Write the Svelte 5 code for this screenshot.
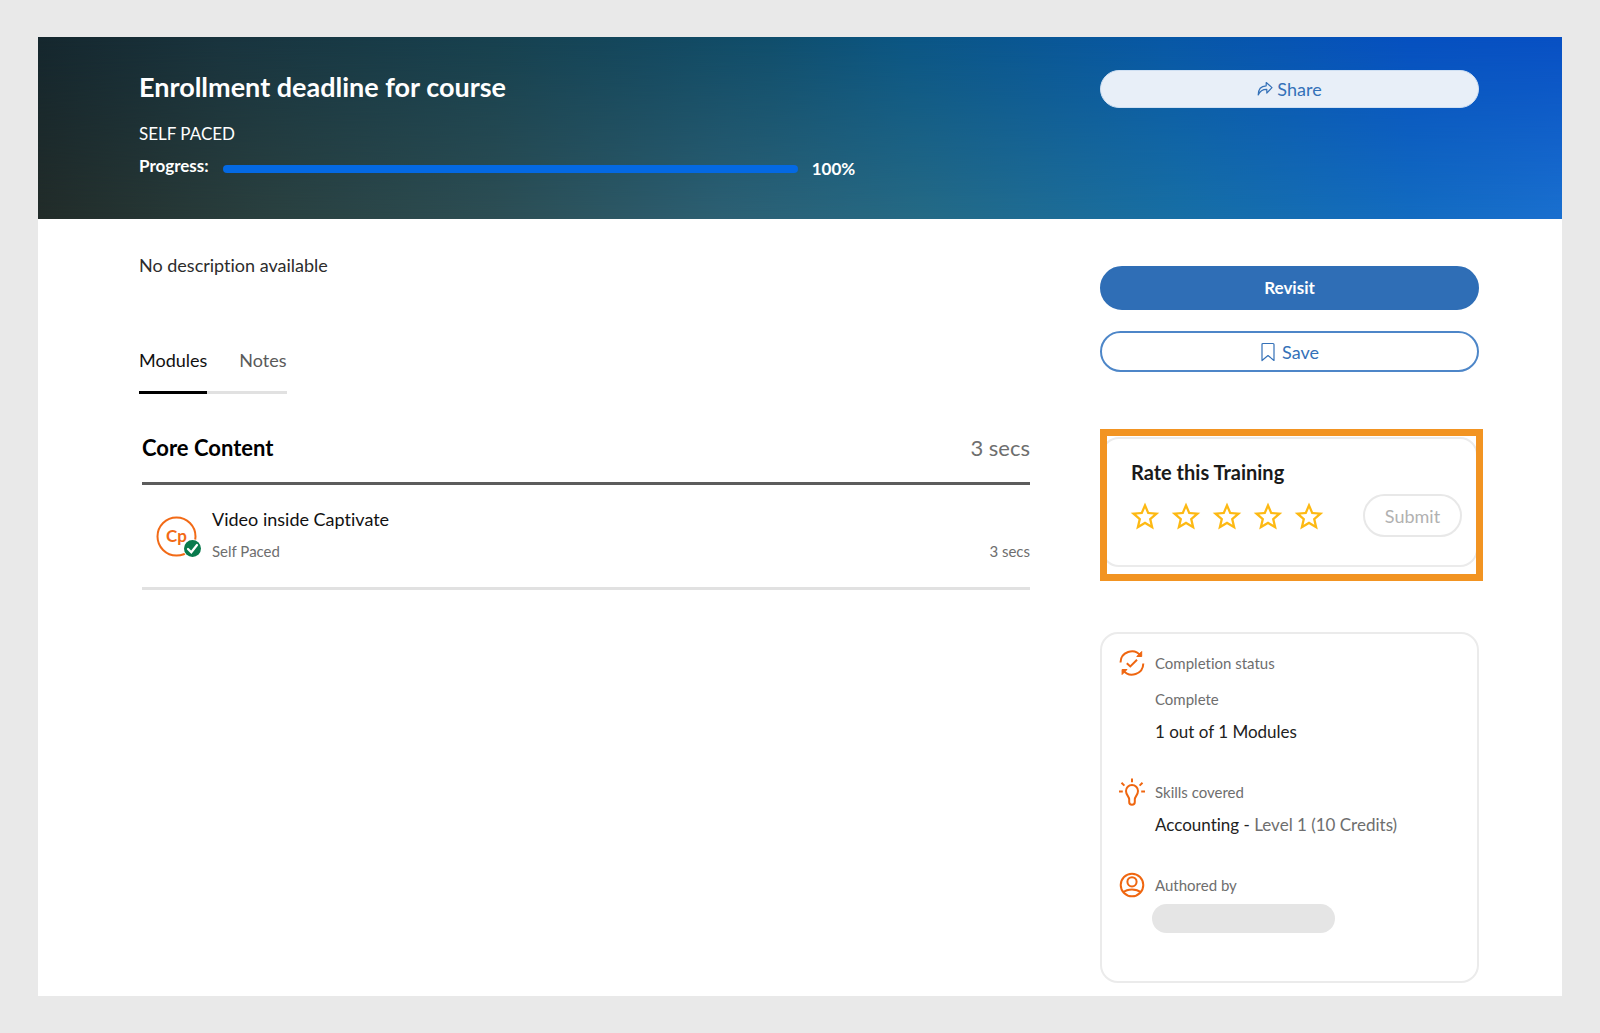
<script>
  let tab = $state('Modules');
  let rating = $state(0);
  const tabs = ['Modules', 'Notes'];
  const stars = [1, 2, 3, 4, 5];
  const progress = 100;
</script>

<div class="page">
  <main class="panel">
    <header class="hero columns">
      <div class="heading">
        <h1>Enrollment deadline for course</h1>
        <p class="format">SELF PACED</p>
        <div class="progress-row">
          <label for="course-progress">Progress:</label>
          <progress id="course-progress" max="100" value={progress}></progress>
          <span class="percent">{progress}%</span>
        </div>
      </div>
      <div class="hero-actions">
        <button class="pill share" type="button">
          <svg width="16" height="16" viewBox="0 0 16 16" aria-hidden="true">
            <path d="M1.2 14C1.2 8.5 4 5 9.2 4.8V1.5L15 6.6L9.8 12V8.4C5.5 8.3 3 10 1.2 14Z" fill="none" stroke="currentColor" stroke-width="1.2" stroke-linejoin="round" />
          </svg>
          Share
        </button>
      </div>
    </header>

    <div class="body columns">
      <div class="content">
        <p class="description">No description available</p>

        <nav class="tabs" aria-label="Course sections">
          {#each tabs as name}
            <button type="button" class:active={tab === name} onclick={() => (tab = name)}>{name}</button>
          {/each}
        </nav>

        <section class="modules">
          <div class="modules-head">
            <h2>Core Content</h2>
            <span>3 secs</span>
          </div>
          <article class="module">
            <svg width="46" height="42" viewBox="0 0 46 42" aria-hidden="true">
              <circle cx="20.500" cy="20.500" r="19" fill="#fff" stroke="#f26a16" stroke-width="2" />
              <text x="20.500" y="26" text-anchor="middle">Cp</text>
              <circle cx="36.500" cy="32.500" r="9.500" fill="#fff" />
              <circle cx="36.500" cy="32.500" r="8.500" fill="#087a4c" />
              <path d="M32 33L35.300 36.300L41 29" fill="none" stroke="#fff" stroke-width="2.200" stroke-linecap="round" />
            </svg>
            <div class="module-text">
              <h3>Video inside Captivate</h3>
              <div class="module-meta"><span>Self Paced</span><span>3 secs</span></div>
            </div>
          </article>
        </section>
      </div>

      <aside>
        <button class="pill revisit" type="button">Revisit</button>
        <button class="pill save" type="button">
          <svg width="16" height="20" viewBox="0 0 16 20" aria-hidden="true">
            <path d="M2 2.500Q2 1.500 3 1.500H13Q14 1.500 14 2.500V18.500L8 13.500L2 18.500Z" fill="none" stroke="currentColor" stroke-width="1.200" stroke-linejoin="round" />
          </svg>
          Save
        </button>

        <div class="highlight">
          <form class="rating" onsubmit={(e) => e.preventDefault()}>
            <h2 id="rate-title">Rate this Training</h2>
            <div class="rating-row">
              <div class="stars" role="radiogroup" aria-labelledby="rate-title">
                {#each stars as n}
                  <label class="star" class:filled={n <= rating}>
                    <input type="radio" name="rating" value={n} aria-label="{n} stars" bind:group={rating} />
                    <svg width="30" height="30" viewBox="1.5 1 21 21" aria-hidden="true">
                      <path class="inside" d="M12 16.300L7 19.300L8.300 13.700L4 9.900L9.700 9.400L12 4L14.300 9.400L20 9.900L15.700 13.700L17 19.300Z" />
                      <path class="outline" d="M22 9.240l-7.190-.620L12 2 9.190 8.630 2 9.240l5.460 4.730L5.820 21 12 17.270 18.180 21l-1.630-7.030L22 9.240zM12 15.400l-3.760 2.270 1-4.280-3.320-2.880 4.380-.380L12 6.100l1.710 4.040 4.380.380-3.320 2.880 1 4.280L12 15.400z" />
                    </svg>
                  </label>
                {/each}
              </div>
              <button class="submit" type="submit" disabled={rating === 0}>Submit</button>
            </div>
          </form>
        </div>

        <section class="info">
          <div class="fact">
            <svg width="28" height="28" viewBox="0 0 28 28" aria-hidden="true">
              <path d="M2.500 13.500A11.300 11.300 0 0 1 22.600 6.600M25.300 14.500A11.300 11.300 0 0 1 5.200 21.400" />
              <path class="solid" d="M23.700 2.500V7.500H18.800ZM4.100 25.500V20.500H9Z" />
              <path d="M8.800 14.200L12.300 17.400L19 10.800" />
            </svg>
            <div>
              <h4>Completion status</h4>
              <p class="minor">Complete</p>
              <p class="value">1 out of 1 Modules</p>
            </div>
          </div>
          <div class="fact">
            <svg width="28" height="28" viewBox="0 0 28 28" aria-hidden="true">
              <path d="M11.200 24V21.500C11.200 18.500 8 17 8 13A6 6 0 0 1 20 13C20 17 16.800 18.500 16.800 21.500V24A2.800 2.800 0 0 1 11.200 24Z" />
              <path d="M14 .5V4.200M3.500 4.800L6.400 7.600M24.500 4.800L21.600 7.600M1 13.500H4.800M23.200 13.500H27" />
            </svg>
            <div>
              <h4>Skills covered</h4>
              <p class="value">Accounting - <span>Level 1 (10 Credits)</span></p>
            </div>
          </div>
          <div class="fact">
            <svg width="28" height="28" viewBox="0 0 28 28" aria-hidden="true">
              <circle cx="14" cy="14" r="11.300" />
              <circle cx="14" cy="10.800" r="4.600" />
              <path d="M5.300 21.300C9.500 17.500 18.500 17.500 22.700 21.300" />
            </svg>
            <div>
              <h4>Authored by</h4>
              <div class="author"></div>
            </div>
          </div>
        </section>
      </aside>
    </div>
  </main>
</div>

<style>
  :global(body) {
    margin: 0;
    background: #e9e9e9;
  }
  .page {
    padding: 37px 38px 38px;
    font-family: Lato, 'Open Sans', sans-serif;
    font-size: 18px;
    line-height: 24px;
    font-variant-ligatures: none;
    color: #2c2c2c;
  }
  h1, h2, h3, h4, p {
    margin: 0;
    font-weight: 400;
  }
  button {
    font: inherit;
    cursor: pointer;
  }
  .panel {
    background: #fff;
  }
  .columns {
    display: grid;
    grid-template-columns: minmax(0, 1fr) 379px;
    column-gap: 70px;
    padding: 0 83px 0 101px;
  }
  .hero {
    position: relative;
    isolation: isolate;
    min-height: 182px;
    color: #fff;
    background: linear-gradient(90deg, #15272e, #19343e 12%, #17414f 30%, #104e6c 48%, #0b5684 57%, #0858a6 74%, #0650c0 90%, #0850c4);
  }
  .hero::before {
    content: '';
    position: absolute;
    inset: 0;
    z-index: -1;
    background: linear-gradient(90deg, #222c29, #2a403f 15%, #2d4e54 30%, #2d6073 45%, #256a85 58%, #176fa5 75%, #136cc0 90%, #1a70cf);
    mask-image: linear-gradient(transparent, #000);
  }
  .heading {
    padding-top: 32px;
  }
  h1 {
    font-size: 27px;
    line-height: 36px;
    font-weight: 700;
  }
  .format {
    margin-top: 17px;
    font-size: 17px;
  }
  .progress-row {
    display: flex;
    align-items: center;
    gap: 14px;
    margin-top: 8px;
    font-size: 17px;
    font-weight: 700;
  }
  .progress-row label {
    padding-bottom: 6px;
  }
  progress {
    appearance: none;
    flex: 0 1 575px;
    min-width: 0;
    height: 8px;
    border: 0;
    border-radius: 4px;
    overflow: hidden;
    background: #d0d0d0;
  }
  progress::-webkit-progress-bar {
    background: #d0d0d0;
  }
  progress::-webkit-progress-value {
    background: #0469e3;
  }
  .hero-actions {
    padding-top: 33px;
  }
  .pill {
    display: flex;
    align-items: center;
    justify-content: center;
    box-sizing: border-box;
    width: 100%;
    border: 2px solid #4d86c8;
    border-radius: 22px;
    color: #3471b8;
    background: #fff;
  }
  .share {
    gap: 4px;
    height: 38px;
    border: 1px solid #cfe0f3;
    background: #e8eff8;
  }
  .revisit {
    height: 44px;
    border-color: #2f6eb6;
    background: #2f6eb6;
    color: #fff;
    font-size: 17px;
    font-weight: 700;
  }
  .save {
    gap: 6px;
    height: 41px;
    margin-top: 21px;
  }
  .content {
    padding-top: 34px;
  }
  .tabs {
    display: flex;
    margin-top: 71px;
  }
  .tabs button {
    padding: 0 0 19px;
    border: 0;
    border-bottom: 3px solid #e1e1e1;
    background: none;
    color: #5a5a5a;
    line-height: 24px;
  }
  .tabs button + button {
    padding-left: 32px;
  }
  .tabs button.active {
    border-color: #000;
    color: #111;
  }
  .modules {
    margin: 40px 0 0 3px;
  }
  .modules-head {
    display: flex;
    justify-content: space-between;
    padding-bottom: 20px;
    border-bottom: 3px solid #5c5c5c;
    font-size: 22px;
    line-height: 28px;
    color: #6e6e6e;
  }
  .modules-head h2 {
    font-size: 22px;
    font-weight: 700;
    color: #000;
  }
  .module {
    display: flex;
    gap: 10px;
    padding: 22px 0 24px 14px;
    border-bottom: 3px solid #e1e1e1;
  }
  .module svg {
    flex: none;
    margin-top: 9px;
  }
  .module text {
    font-size: 17px;
    font-weight: 700;
    fill: #f26a16;
  }
  .module-text {
    flex: 1;
  }
  h3 {
    font-size: 18px;
    color: #111;
  }
  .module-meta {
    display: flex;
    justify-content: space-between;
    margin-top: 8px;
    font-size: 15px;
    color: #6e6e6e;
  }
  aside {
    padding: 47px 0 13px;
  }
  .highlight {
    margin: 57px -4px 0 0;
    padding: 1px 0 7px;
    border: 7px solid #f29422;
    overflow: hidden;
  }
  .rating {
    height: 107px;
    margin: 0 -2px 0 -6px;
    padding: 19px 14px 0 28px;
    border: 2px solid #ebebeb;
    border-radius: 18px;
  }
  .rating h2 {
    font-size: 20px;
    line-height: 28px;
    font-weight: 700;
    color: #1a1a1a;
  }
  .rating-row {
    display: flex;
    align-items: center;
    justify-content: space-between;
    margin-top: 8px;
  }
  .stars {
    display: flex;
    gap: 11px;
    margin-left: -1px;
  }
  .star {
    display: grid;
    cursor: pointer;
  }
  .star input,
  .star svg {
    grid-area: 1 / 1;
  }
  .star input {
    appearance: none;
    margin: 0;
  }
  .star .outline {
    fill: #fdb913;
  }
  .star .inside {
    fill: none;
  }
  .star.filled .inside {
    fill: #fdb913;
  }
  .submit {
    height: 43px;
    width: 99px;
    padding: 0;
    border: 2px solid #e8e8e8;
    border-radius: 22px;
    background: #fff;
    color: #b1b1b1;
  }
  .info {
    margin-top: 51px;
    padding: 17px 16px 48px;
    border: 2px solid #ebebeb;
    border-radius: 18px;
  }
  .fact {
    display: grid;
    grid-template-columns: 28px 1fr;
    gap: 9px;
  }
  .fact + .fact {
    margin-top: 36px;
  }
  .fact svg {
    margin-top: -2px;
    fill: none;
    stroke: #ef6610;
    stroke-width: 2;
  }
  .fact .solid {
    fill: #ef6610;
    stroke-width: 1;
  }
  h4,
  .minor {
    font-size: 15px;
    line-height: 24px;
    color: #6e6e6e;
  }
  .minor {
    margin-top: 12px;
  }
  .value {
    margin-top: 8px;
    font-size: 17px;
    line-height: 25px;
    color: #222;
  }
  .value span {
    color: #6e6e6e;
  }
  .author {
    width: 183px;
    height: 29px;
    margin: 7px 0 0 -3px;
    border-radius: 15px;
    background: #e5e5e5;
  }
</style>
